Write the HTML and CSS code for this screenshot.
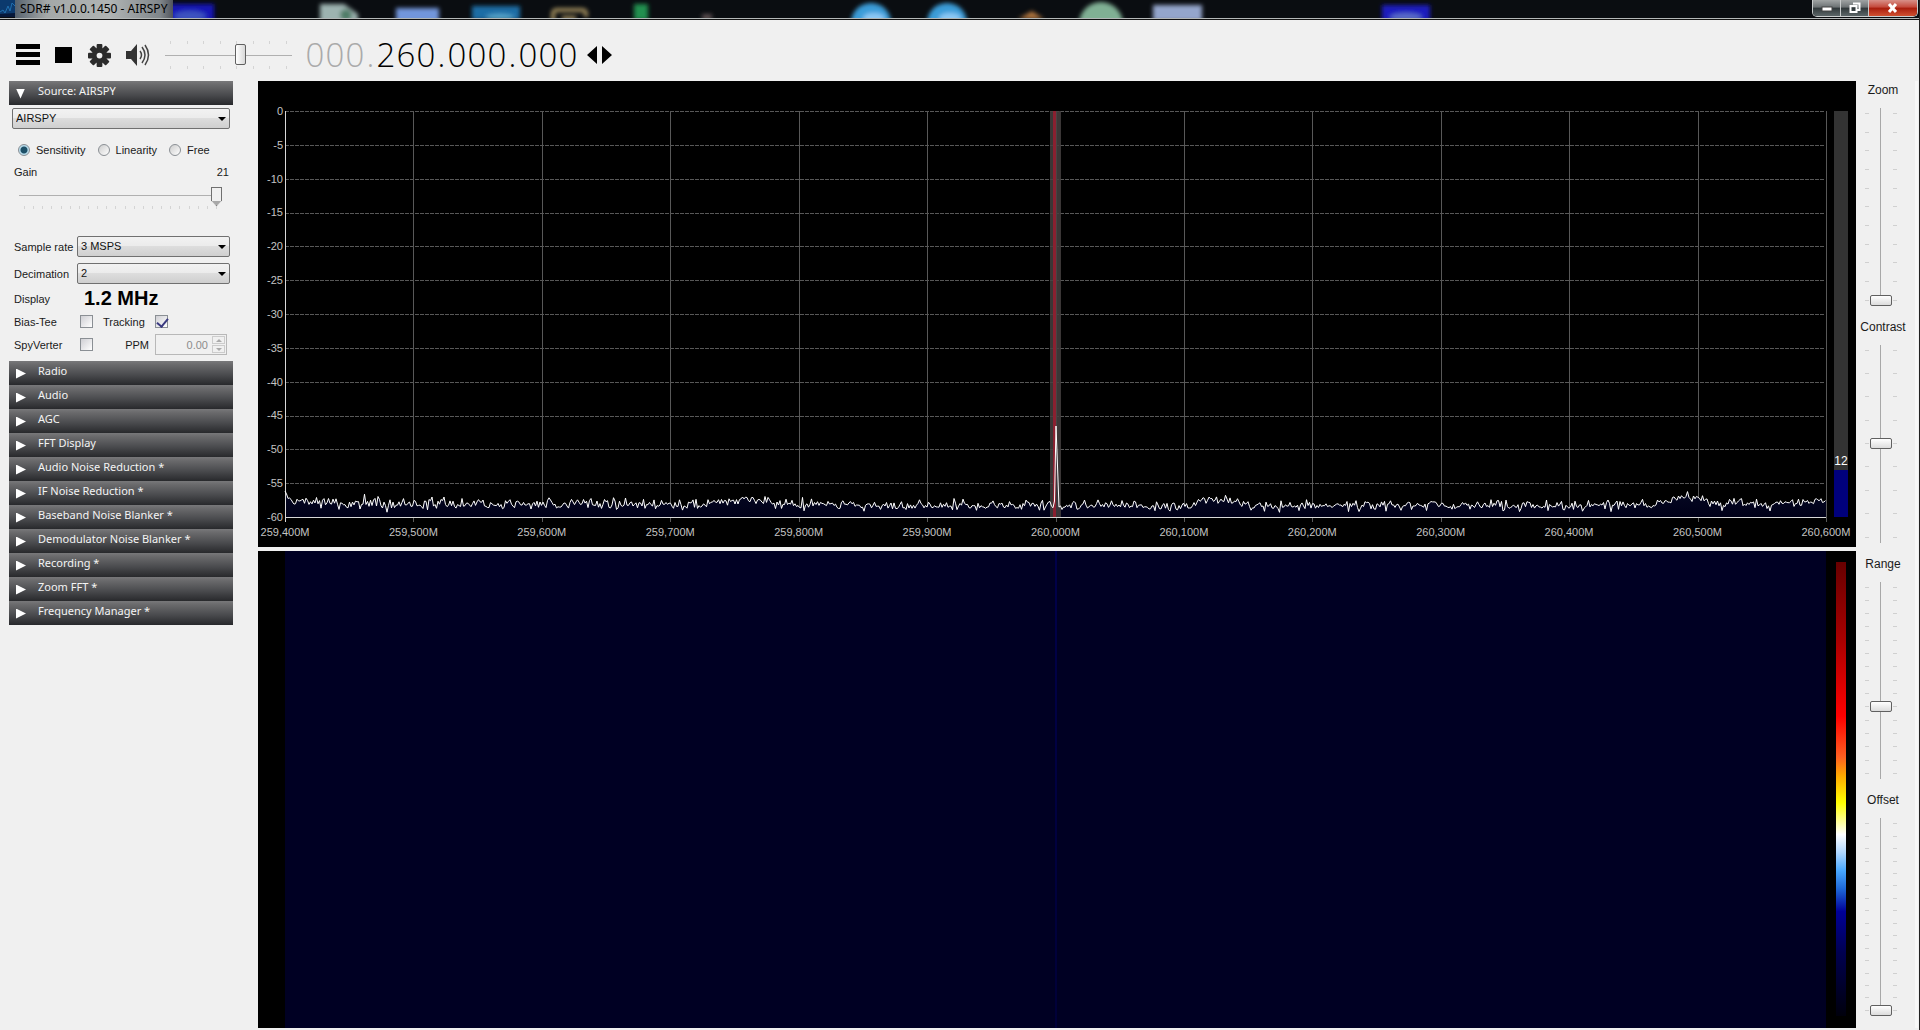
FILE: index.html
```html
<!DOCTYPE html>
<html lang="en">
<head>
<meta charset="utf-8">
<title>SDR# v1.0.0.1450 - AIRSPY</title>
<link rel="stylesheet" href="styles.css">
</head>
<body>
<header class="titlebar">
  <svg class="backdrop" height="18" aria-hidden="true">
    <defs><filter id="soft" x="-10%" y="-50%" width="120%" height="200%"><feGaussianBlur stdDeviation="2"/></filter></defs>
    <g filter="url(#soft)">
      <rect x="168" y="4" width="46" height="18" fill="#1414b4"/><ellipse cx="190" cy="16" rx="16" ry="5" fill="#3d52c0"/>
      <path d="M320 4h24l14 10v8h-38z" fill="#9db3b0"/><circle cx="346" cy="15" r="6" fill="#4f7d68"/>
      <rect x="396" y="8" width="43" height="14" fill="#7296dc"/>
      <rect x="472" y="6" width="48" height="14" fill="#1d6da5"/><ellipse cx="500" cy="17" rx="14" ry="3" fill="#55a6cc"/>
      <path d="M553 22v-8q0-4 4-4h25q4 0 4 4v3M562 18h14" fill="none" stroke="#a08c5c" stroke-width="4"/>
      <rect x="634" y="4" width="14" height="16" fill="#209050"/>
      <rect x="702" y="14" width="10" height="6" fill="#5a4e50"/>
      <circle cx="871" cy="23" r="20" fill="#3a9cd8"/><ellipse cx="874" cy="18" rx="11" ry="5" fill="#8cc8f4"/>
      <circle cx="947" cy="23" r="20" fill="#3a9cd8"/><ellipse cx="950" cy="18" rx="11" ry="5" fill="#8cc8f4"/>
      <path d="M1018 19h26l-12-8z" fill="#b0743c"/>
      <circle cx="1101" cy="24" r="22" fill="#80b094"/>
      <rect x="1153" y="5" width="49" height="16" fill="#94a6cc"/>
      <rect x="1382" y="5" width="48" height="16" fill="#1a1abe"/><ellipse cx="1406" cy="17" rx="16" ry="4" fill="#5a6cc8"/>
    </g>
  </svg>
  <svg class="appicon" viewBox="0 0 15 17" width="15" height="17" aria-hidden="true"><rect width="15" height="17" fill="#0c3a6e"/><path d="M0 12l3-2 2 3 3-7 2 5 2-8 3 3" fill="none" stroke="#2070b0" stroke-width="1"/><path d="M0 17v-3l15-1v4z" fill="#06183a"/></svg>
  <h1 class="caption">SDR# v1.0.0.1450 - AIRSPY</h1>
  <div class="winbuttons">
    <button class="min" aria-label="Minimize"><svg width="12" height="10"><rect x="1" y="4" width="10" height="4" fill="#fff" stroke="#444"/></svg></button>
    <button class="restore" aria-label="Restore"><svg width="12" height="12"><path d="M4 1.5h6.500v6.500h-2M1.500 4h6v6h-6z" fill="none" stroke="#fff" stroke-width="2"/></svg></button>
    <button class="close" aria-label="Close"><svg width="12" height="10"><path d="M2 1l7 8M9 1l-7 8" stroke="#fff" stroke-width="3"/></svg></button>
  </div>
</header>

<div class="toolbar">
  <button aria-label="Menu"><svg width="24" height="22"><path d="M0 0h24v5H0zM0 8h24v5H0zM0 16h24v5H0z"/></svg></button>
  <button aria-label="Stop"><svg width="18" height="16"><path d="M0 0h17v16H0z"/></svg></button>
  <button aria-label="Settings"><svg width="23" height="23" viewBox="-12 -12 24 24"><g fill="#2b2b2b"><circle r="8"/><g id="cog"><rect x="-3" y="-12" width="6" height="24" rx="1"/><rect x="-12" y="-3" width="24" height="6" rx="1"/></g><use href="#cog" transform="rotate(45)"/></g><circle r="3" fill="#f0f0f0"/></svg></button>
  <button aria-label="Mute"><svg width="24" height="24"><path d="M0 8h5l6-7v22l-6-7H0z" fill="#333"/><path d="M14 8q3 4 0 8M16 4q6 8 0 16M19 2q7 10 0 20" fill="none" stroke="#444" stroke-width="1.500"/></svg></button>
  <div class="volume">
    <div class="hticks" data-ticks="8"></div>
    <input class="hslider" type="range" aria-label="Volume" min="0" max="100" value="60">
    <div class="hticks" data-ticks="8"></div>
  </div>
  <div class="frequency"><i>0</i><i>0</i><i>0</i><i class="dot">.</i><b>2</b><b>6</b><b>0</b><b class="dot">.</b><b>0</b><b>0</b><b>0</b><b class="dot">.</b><b>0</b><b>0</b><b>0</b></div>
  <button class="step" aria-label="Tuning style"><svg width="26" height="18"><path d="M10 0v18L0 9zM15 0v18l10-9z"/></svg></button>
</div>

<div class="workspace">
  <aside class="sidebar">
    <button class="head open">Source: AIRSPY</button>
    <section class="source">
      <span class="combo"><select aria-label="Source"><option>AIRSPY</option></select></span>
      <div class="modes">
        <label><input type="radio" name="mode" checked>Sensitivity</label>
        <label><input type="radio" name="mode">Linearity</label>
        <label><input type="radio" name="mode">Free</label>
      </div>
      <div class="gain"><label for="gain">Gain</label><output for="gain">21</output></div>
      <div class="gainbox">
        <input class="hslider pointed" id="gain" type="range" min="0" max="21" value="21">
        <div class="hticks" data-ticks="22"></div>
      </div>
      <div class="row tall"><label for="rate">Sample rate</label><span class="combo"><select id="rate"><option>3 MSPS</option></select></span></div>
      <div class="row tall"><label for="deci">Decimation</label><span class="combo"><select id="deci"><option>2</option></select></span></div>
      <div class="row"><span>Display</span><strong>1.2 MHz</strong></div>
      <div class="row"><label for="bias">Bias-Tee</label><div class="cells"><input type="checkbox" id="bias"><label for="track">Tracking</label><input type="checkbox" id="track" checked></div></div>
      <div class="row"><label for="spy">SpyVerter</label><div class="cells"><input type="checkbox" id="spy"><label for="ppm">PPM</label><span class="spin"><input type="text" id="ppm" value="0.00" disabled><span class="arrows"><button disabled aria-label="Increase"></button><button disabled aria-label="Decrease"></button></span></span></div></div>
    </section>
    <button class="head">Radio</button>
    <button class="head">Audio</button>
    <button class="head">AGC</button>
    <button class="head">FFT Display</button>
    <button class="head">Audio Noise Reduction *</button>
    <button class="head">IF Noise Reduction *</button>
    <button class="head">Baseband Noise Blanker *</button>
    <button class="head">Demodulator Noise Blanker *</button>
    <button class="head">Recording *</button>
    <button class="head">Zoom FFT *</button>
    <button class="head">Frequency Manager *</button>
  </aside>

  <main class="displays">
    <section class="spectrum">
      <div class="yaxis"><span>0</span><span>-5</span><span>-10</span><span>-15</span><span>-20</span><span>-25</span><span>-30</span><span>-35</span><span>-40</span><span>-45</span><span>-50</span><span>-55</span><span>-60</span></div>
      <svg class="plot" viewBox="0 0 1541 406" preserveAspectRatio="none" aria-hidden="true">
        <defs><linearGradient id="under" gradientUnits="userSpaceOnUse" x1="0" y1="330" x2="0" y2="406"><stop offset="0" stop-color="#101838"/><stop offset="1" stop-color="#000018"/></linearGradient></defs>
        <g class="grid"></g>
        <path class="fill"/>
        <rect x="765" y="0" width="11" height="406" fill="#444040" opacity=".85"/>
        <rect x="768" y="0" width="3" height="406" fill="#8a2030"/>
        <path class="axis" d="M0 0V411M0 406H1541"/>
        <path class="trace"/>
      </svg>
      <div class="meter"><span>12</span><div class="level"></div></div>
      <div class="xaxis"><span>259,400M</span><span>259,500M</span><span>259,600M</span><span>259,700M</span><span>259,800M</span><span>259,900M</span><span>260,000M</span><span>260,100M</span><span>260,200M</span><span>260,300M</span><span>260,400M</span><span>260,500M</span><span>260,600M</span></div>
    </section>
    <section class="waterfall">
      <div class="history"></div>
      <div class="scale"></div>
    </section>
  </main>

  <aside class="sliders">
    <div class="vgroup"><label for="zoom">Zoom</label><div class="vbox"><div class="vticks" data-ticks="11"></div><input type="range" id="zoom" min="0" max="100" value="0"><div class="vticks" data-ticks="11"></div></div></div>
    <div class="vgroup"><label for="contrast">Contrast</label><div class="vbox"><div class="vticks" data-ticks="9"></div><input type="range" id="contrast" min="0" max="100" value="50"><div class="vticks" data-ticks="9"></div></div></div>
    <div class="vgroup"><label for="range">Range</label><div class="vbox"><div class="vticks" data-ticks="15"></div><input type="range" id="range" min="0" max="100" value="36"><div class="vticks" data-ticks="15"></div></div></div>
    <div class="vgroup"><label for="offset">Offset</label><div class="vbox"><div class="vticks" data-ticks="16"></div><input type="range" id="offset" min="0" max="100" value="0"><div class="vticks" data-ticks="16"></div></div></div>
  </aside>
</div>
<script src="app.js"></script>
</body>
</html>
```
FILE: styles.css
```css
* { box-sizing: border-box; }
body {
  margin: 0;
  height: 100vh;
  display: flex;
  flex-direction: column;
  background: #f0f0f0;
  border-right: 1px solid #222;
  color: #1a1a1a;
  font: 11px/14px "Liberation Sans", Arial, sans-serif;
  overflow: hidden;
}
button { border: 0; padding: 0; background: none; font: inherit; display: block; }
button svg { display: block; }
input { margin: 0; }

/* Title bar */
.titlebar {
  position: relative;
  flex: none;
  height: 20px;
  display: flex;
  background: #0a0d11;
  border-bottom: 1px solid #111;
  box-shadow: inset 0 -1px #b4b8b8;
  overflow: hidden;
}
.backdrop { position: absolute; left: 0; top: 0; width: 100%; }
.appicon { position: relative; }
.caption {
  position: relative;
  margin: 0;
  height: 18px;
  padding: 0 6px 0 5px;
  font: 12px/17px "Noto Sans", "Open Sans", sans-serif;
  color: #000;
  background: linear-gradient(90deg, #56626e, #a4a8a8 20%, #b0b4b4 60%, #80868a 92%, #50545c);
}
.winbuttons {
  position: relative;
  display: flex;
  height: 17px;
  margin-left: auto;
  margin-right: 1px;
  border: 1px solid #c8cccc;
  border-top: 0;
  border-radius: 0 0 5px 5px;
  overflow: hidden;
}
.winbuttons button { width: 28px; display: grid; place-items: center; background: linear-gradient(#a0a4a4, #6c7274 45%, #30383a 50%, #5c6668); border-right: 1px solid #c8cccc; }
.winbuttons .close { width: 48px; border: 0; background: linear-gradient(#d89088, #c4483a 45%, #a81c0c 50%, #d05030); }

/* Toolbar */
.toolbar { flex: none; height: 61px; padding: 9px 16px 0; display: flex; align-items: center; gap: 15px; }
.volume { width: 127px; display: grid; }
.hticks { display: flex; justify-content: space-between; height: 3px; padding: 0 5px; }
.hticks i { width: 1px; background: #c8c8c8; }
.volume .hticks i { background: #d4d4d4; }
.frequency { display: flex; margin-left: -2px; font: 300 33px/40px "Open Sans", "Noto Sans", sans-serif; }
.frequency i, .frequency b { width: 20px; text-align: center; font-weight: 300; font-style: normal; color: #000; }
.frequency i { color: #aaa; }
.frequency .dot { width: 11px; }
.step { margin-left: -6px; }

/* Horizontal sliders */
input[type=range] { appearance: none; background: none; }
.hslider { display: block; width: 100%; height: 22px; }
.hslider::-webkit-slider-runnable-track { height: 22px; background: linear-gradient(#b0b0b0, #b0b0b0) center / 100% 1px no-repeat; }
.hslider::-webkit-slider-thumb { appearance: none; width: 11px; height: 21px; border: 1px solid #606060; border-radius: 2px; background: linear-gradient(90deg, #fff, #d8d8d8); }
.pointed::-webkit-slider-thumb { height: 19px; margin-top: 3px; border: 0; border-radius: 0; background: #707070; clip-path: polygon(0 0, 100% 0, 100% 70%, 50% 100%, 0 70%); box-shadow: inset 0 0 0 1px #707070, inset 0 -4px 0 1px #a8a8a8, inset 0 0 0 20px #f0f0f0; }

/* Workspace */
.workspace { flex: 1; min-height: 0; display: flex; padding: 0 0 2px 9px; }
.sidebar { flex: none; width: 224px; margin-right: 25px; }
.head {
  width: 100%;
  height: 24px;
  padding: 0 8px 4px 7px;
  display: flex;
  align-items: center;
  color: #f4f4f4;
  font: 11px/18px "Noto Sans", "Open Sans", sans-serif;
  background: linear-gradient(#78787a, #6a6a6c 15%, #4c4d50 55%, #28292c);
  white-space: nowrap;
}
.head::before { content: ""; width: 10px; height: 10px; margin: 5px 12px 0 0; background: #fff; clip-path: polygon(0 0, 100% 50%, 0 100%); }
.head.open::before { clip-path: polygon(0 0, 90% 0, 45% 100%); }
.source { padding: 3px 3px 5px; }
.combo { position: relative; display: block; height: 21px; }
.combo select {
  appearance: none;
  display: block;
  width: 100%;
  height: 21px;
  padding: 0 3px;
  border: 1px solid #707070;
  border-radius: 2px;
  background: linear-gradient(#f2f2f2, #ebebeb 50%, #dddddd 50%, #cfcfcf);
  font: 11px/19px "Liberation Sans", Arial, sans-serif;
  color: #111;
}
.combo::after { content: ""; position: absolute; right: 4px; top: 9px; border: 4px solid transparent; border-top-color: #000; border-bottom: 0; }
.modes { display: flex; gap: 12px; height: 22px; margin-top: 10px; padding-left: 6px; align-items: center; }
.modes label { display: flex; align-items: center; gap: 6px; }
input[type=radio] { appearance: none; width: 12px; height: 12px; border: 1px solid #8a8f94; border-radius: 50%; background: linear-gradient(135deg, #ccc, #fff); }
input[type=radio]:checked { background: radial-gradient(circle, #1d5068 0 3px, #b8dcec 4px); }
.gain { display: flex; justify-content: space-between; align-items: center; height: 22px; padding: 0 1px 0 2px; }
.gainbox { height: 50px; padding: 1px 8px 0 7px; }
.gainbox .hticks i { background: #d4d4d4; }
.row { display: grid; grid-template-columns: 65px 1fr; height: 23px; align-items: center; }
.row.tall { height: 27px; }
.row > :first-child { padding-left: 2px; }
.row strong { padding-left: 7px; font-size: 20px; line-height: 23px; color: #000; }
.cells { display: grid; grid-template-columns: 23px 52px 1fr; align-items: center; padding-left: 3px; }
.cells > label[for=track] { justify-self: start; }
.cells > label[for=ppm] { justify-self: end; padding-right: 6px; }
input[type=checkbox] { appearance: none; width: 13px; height: 13px; border: 1px solid #8a8f94; background: linear-gradient(135deg, #cfcfd4, #fff); }
input[type=checkbox]:checked::after { content: ""; display: block; width: 5px; height: 9px; margin: 0 0 0 3px; border: solid #3a3a80; border-width: 0 2px 2px 0; rotate: 40deg; }
.spin { display: flex; width: 72px; height: 21px; border: 1px solid #b8b8b8; }
.spin input { flex: 1; min-width: 0; border: 0; padding: 0 3px; background: #f0f0f0; color: #8c8c8c; text-align: right; font: inherit; }
.arrows { width: 15px; display: grid; grid-template-rows: 1fr 1fr; gap: 1px; padding: 1px; }
.arrows button { display: grid; place-items: center; border: 1px solid #ccc; }
.arrows button::after { content: ""; border: 3px solid transparent; border-bottom-color: #aaa; border-top: 0; }
.arrows button + button::after { rotate: 180deg; }

/* Displays */
.displays { flex: 1; min-width: 0; display: grid; grid-template-rows: 466fr 477fr; row-gap: 4px; }
.spectrum { min-height: 0; background: #000; color: #c4c4c4; display: grid; grid-template: 30px 1fr 30px / 27px 1fr 8px 14px 8px; }
.yaxis { grid-area: 2 / 1; margin: -7px 0; padding-right: 2px; display: flex; flex-direction: column; justify-content: space-between; text-align: right; }
.plot { grid-area: 2 / 2; display: block; width: 100%; height: 100%; min-height: 0; overflow: visible; shape-rendering: crispEdges; }
.plot path { vector-effect: non-scaling-stroke; fill: none; }
.grid path { stroke: #585858; }
.grid .h { stroke-dasharray: 4 1; }
.axis { stroke: #d8d8d8; }
.plot .fill { fill: url(#under); }
.trace { stroke: #fff; shape-rendering: geometricPrecision; }
.meter { grid-area: 2 / 4; display: flex; flex-direction: column; justify-content: flex-end; background: #333; color: #fff; text-align: center; font-size: 12px; }
.meter span { padding-bottom: 2px; }
.level { height: 47px; background: #00007c; }
.xaxis { grid-area: 3 / 2; display: flex; justify-content: space-between; margin: 8px -30px 0; }
.xaxis span { width: 60px; text-align: center; }
.waterfall { min-height: 0; background: #000; display: grid; grid-template-columns: 27px 1fr 10px 10px 10px; }
.history { grid-column: 2; background: linear-gradient(#00004a, #000038) 50% 0 / 2px 100% no-repeat, #000023; }
.scale {
  grid-column: 4;
  margin: 11px 0 12px;
  background: linear-gradient(#680000, #a80000 17%, #ff0000 34%, #ff6020 43%, #ffa800 47%, #ffff00 53%, #fff 60%, #b0d8ff 64%, #48a8ff 68%, #1e68d8 72%, #000098 77%, #000050 86%, #00000c);
}

/* Right-hand sliders */
.sliders { flex: none; width: 62px; margin-right: 1px; display: grid; grid-template-rows: repeat(4, 1fr); border-right: 3px solid #f8f8f8; }
.vgroup { display: flex; flex-direction: column; min-height: 0; padding-top: 2px; }
.vgroup label { text-align: center; font-size: 12px; padding-right: 5px; }
.vbox { flex: 1; min-height: 0; display: flex; gap: 1px; margin: 11px 0 12px 9px; }
.vbox input { writing-mode: vertical-lr; direction: rtl; width: 22px; height: 100%; }
.vbox input::-webkit-slider-runnable-track { width: 22px; background: linear-gradient(#a8a8a8, #a8a8a8) 10px 0 / 1px 100% no-repeat; }
.vbox input::-webkit-slider-thumb { appearance: none; width: 22px; height: 11px; border: 1px solid #606060; border-radius: 2px; background: linear-gradient(#fff, #dcdcdc); }
.vticks { width: 4px; display: flex; flex-direction: column; justify-content: space-between; padding: 5px 0; }
.vticks i { height: 1px; background: #d0d0d0; }
```
FILE: app.js
```js
// Slider tick marks
document.querySelectorAll("[data-ticks]").forEach(function (el) {
  for (var i = 0; i < +el.dataset.ticks; i++) el.appendChild(document.createElement("i"));
});

// Spectrum grid
var W = 1541, H = 406, NS = "http://www.w3.org/2000/svg";
var grid = document.querySelector(".grid");
function line(d, cls) {
  var p = document.createElementNS(NS, "path");
  p.setAttribute("d", d);
  p.setAttribute("class", cls);
  grid.appendChild(p);
}
for (var r = 0; r < 12; r++) line("M0 " + Math.round(r * H / 12) + "H" + (W - 2), "h");
for (var c = 1; c <= 12; c++) line("M" + Math.round(c * W / 12) + " 0V" + (H + 5), "v");

// Noise floor with a carrier at the centre frequency
var seed = 7;
function rnd() { seed = (seed * 16807) % 2147483647; return seed / 2147483647; }
function bump(x, at, w, h) { return h * Math.exp(-Math.pow((x - at) / w, 2)); }
var pts = [];
for (var x = 0; x < W; x += 1.5) {
  var base = 392 + 2.5 * Math.min(1, x / 700) - bump(x, 0, 4, 9) - bump(x, 15, 18, 3) - bump(x, 460, 26, 6)
    - bump(x, 930, 22, 6) - bump(x, 1403, 18, 8) - 3 * Math.max(0, (x - 1250) / 300);
  var y = base + (rnd() + rnd() + rnd() - 1.5) * 5;
  var spike = rnd();
  if (spike > 0.985) y += 4;
  if (spike < 0.01) y -= 3;
  if (x > 768 && x < 774) y = x < 770 ? 390 : x < 771 ? 355 : x < 772.4 ? 315 : 355;
  pts.push(x + " " + y.toFixed(1));
}
var d = "M" + pts.join("L");
document.querySelector(".trace").setAttribute("d", d);
document.querySelector(".fill").setAttribute("d", d + "V" + H + "H0Z");
```
